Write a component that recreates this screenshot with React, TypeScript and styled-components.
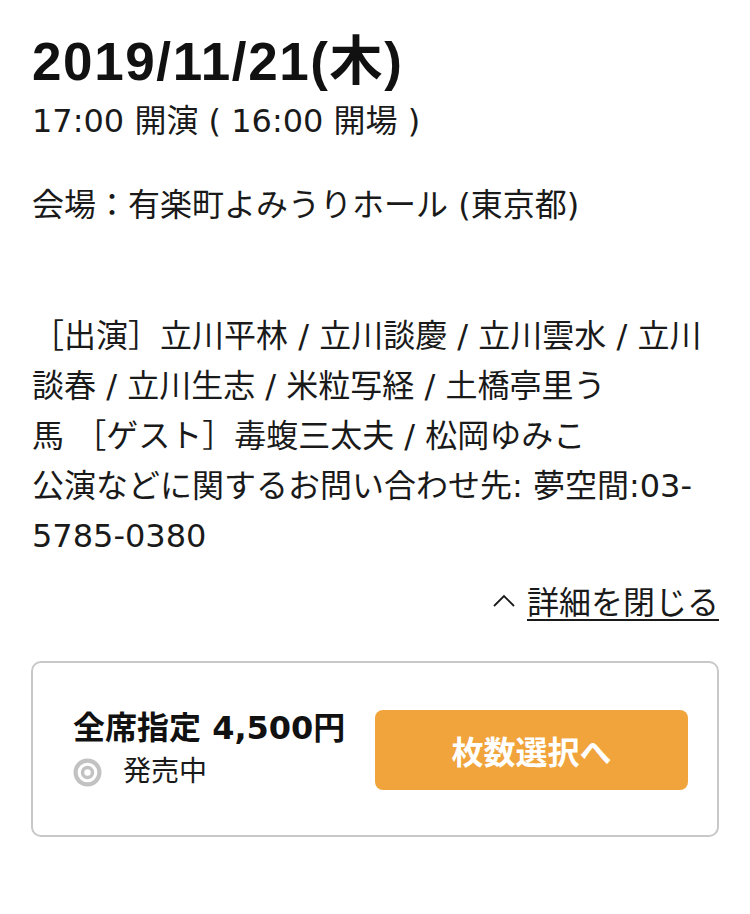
import React from "react";
import styled, { createGlobalStyle } from "styled-components";

const GlobalStyle = createGlobalStyle`
  html, body {
    margin: 0;
    padding: 0;
    background: #ffffff;
  }
  body {
    font-family: "DejaVu Sans", "Noto Sans CJK JP", sans-serif;
    color: #1a1a1a;
  }
`;

const App: React.FC = () => {
  return (
    <>
      <GlobalStyle />
      <SPage>
        <STitle>2019/11/21(木)</STitle>
        <SText $top={4}>17:00 開演 ( 16:00 開場 )</SText>
        <SText $top={34}>会場：有楽町よみうりホール (東京都)</SText>
        <SText $top={81}>
          ［出演］立川平林 / 立川談慶 / 立川雲水 / 立川
          <br />
          談春 / 立川生志 / 米粒写経 / 土橋亭里う
          <br />
          馬 ［ゲスト］毒蝮三太夫 / 松岡ゆみこ
          <br />
          公演などに関するお問い合わせ先: 夢空間:03-
          <br />
          5785-0380
        </SText>
        <SLinkRow>
          <svg width="24" height="14" viewBox="0 0 24 14">
            <polyline
              points="2,12 12,2 22,12"
              fill="none"
              stroke="#1a1a1a"
              strokeWidth="1.8"
            />
          </svg>
          <SLink href="#">詳細を閉じる</SLink>
        </SLinkRow>
        <SCard>
          <SInfo>
            <SPrice>全席指定 4,500円</SPrice>
            <SStatus>
              <svg width="29" height="29" viewBox="0 0 28 28">
                <circle cx="14" cy="14" r="11.5" fill="none" stroke="#c2c2c2" strokeWidth="4" />
                <circle cx="14" cy="14" r="4.8" fill="none" stroke="#c2c2c2" strokeWidth="3.4" />
              </svg>
              <span>発売中</span>
            </SStatus>
          </SInfo>
          <SButton>枚数選択へ</SButton>
        </SCard>
      </SPage>
    </>
  );
};

const SPage = styled.div`
  padding: 32px 31px 40px 32px;
  display: flex;
  flex-flow: column nowrap;
`;

const STitle = styled.h1`
  margin: 0;
  font-family: "Liberation Sans", "Noto Sans CJK JP", sans-serif;
  font-weight: 700;
  font-size: 53px;
  line-height: 60px;
  letter-spacing: 1.6px;
  color: #111111;
`;

const SText = styled.p<{ $top: number }>`
  margin: ${({ $top }) => $top}px 0 0;
  font-size: 32px;
  line-height: 50px;
  white-space: nowrap;
`;

const SLinkRow = styled.div`
  margin-top: 17px;
  display: flex;
  justify-content: flex-end;
  align-items: center;
  gap: 11px;
  height: 50px;
  svg {
    margin-top: -4px;
  }
`;

const SLink = styled.a`
  font-size: 32px;
  line-height: 50px;
  color: #1a1a1a;
  text-decoration: underline;
  text-decoration-thickness: 2px;
  text-underline-offset: 5px;
`;

const SCard = styled.div`
  margin: 33px 0 0 -1px;
  border: 2px solid #c8c8c8;
  border-radius: 10px;
  padding: 43px 29px 41px 40px;
  display: flex;
  align-items: center;
  justify-content: space-between;
`;

const SInfo = styled.div`
  display: flex;
  flex-flow: column nowrap;
`;

const SPrice = styled.div`
  font-weight: 700;
  font-size: 32px;
  line-height: 44px;
  color: #111111;
  white-space: nowrap;
`;

const SStatus = styled.div`
  display: flex;
  align-items: center;
  gap: 21px;
  font-size: 28px;
  line-height: 44px;
  svg {
    flex: none;
  }
`;

const SButton = styled.button`
  width: 313px;
  height: 80px;
  border: none;
  border-radius: 8px;
  background: #f0a43b;
  color: #ffffff;
  font-family: "DejaVu Sans", "Noto Sans CJK JP", sans-serif;
  font-weight: 700;
  font-size: 32px;
  cursor: pointer;
`;

export default App;
